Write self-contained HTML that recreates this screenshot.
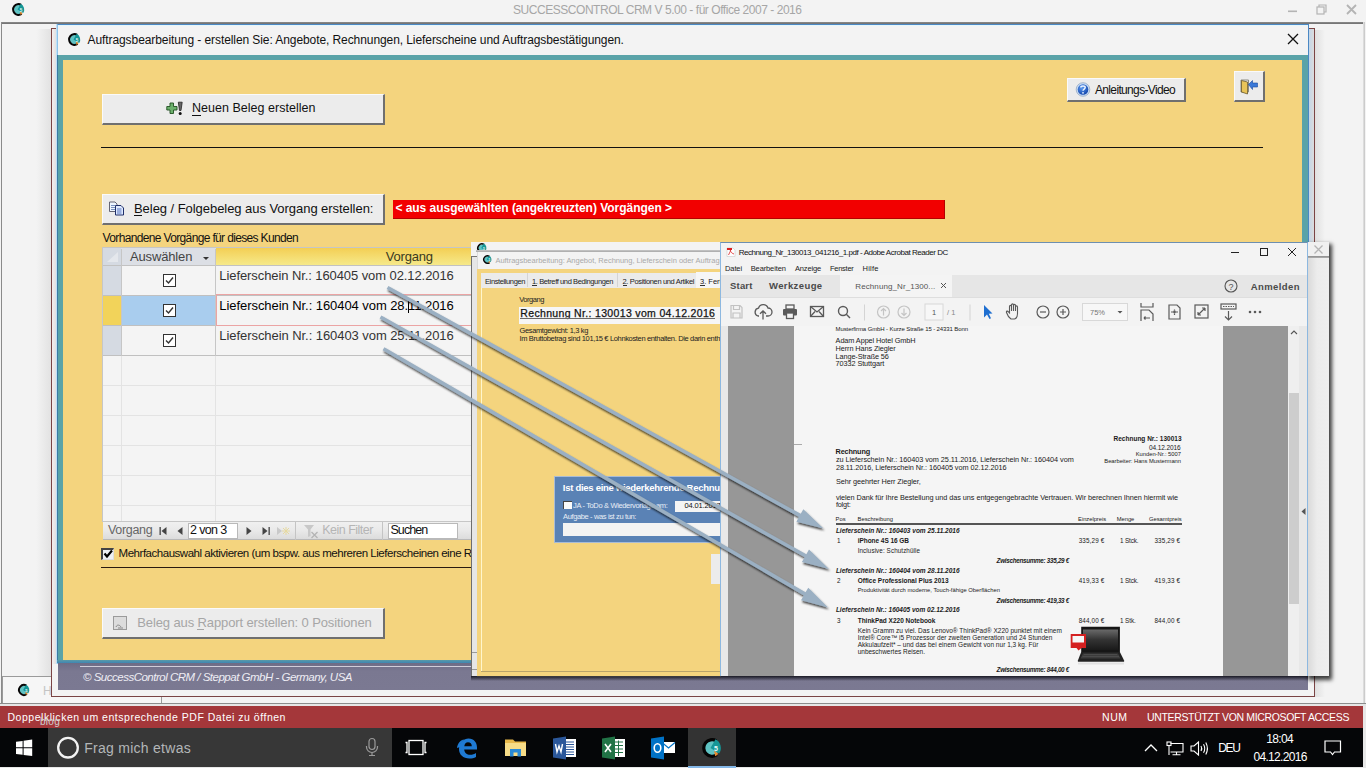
<!DOCTYPE html>
<html><head><meta charset="utf-8">
<style>
*{margin:0;padding:0;box-sizing:border-box}
html,body{width:1366px;height:768px;overflow:hidden;background:#f3f3f3;font-family:"Liberation Sans",sans-serif;position:relative}
.a{position:absolute}
.t{position:absolute;white-space:nowrap;line-height:1}
svg{position:absolute;overflow:visible}
</style></head><body>
<div class="a" style="left:0px;top:0px;width:1366px;height:22px;background:#f3f3f3"></div>
<div class="a" style="left:0px;top:22px;width:1366px;height:2px;background:linear-gradient(180deg,#8c8c8c,#6e6e6e)"></div>
<div class="a" style="left:0px;top:22px;width:1px;height:684px;background:#f3f3f3"></div>
<div class="a" style="left:1px;top:22px;width:1px;height:684px;background:#8a8a8a"></div>
<div class="a" style="left:1363px;top:22px;width:2px;height:684px;background:linear-gradient(90deg,#e4e4e4,#c4c4c4)"></div>
<div class="a" style="left:1365px;top:22px;width:1px;height:684px;background:#f3f3f3"></div>
<svg style="left:12px;top:3px" width="13" height="13" viewBox="0 0 20 20">
<circle cx="10" cy="10" r="7.2" fill="#5ec3c3"/>
<path d="M14.2 2.8 A8.3 8.3 0 1 0 14.8 16.8" fill="none" stroke="#050505" stroke-width="3.2"/>
<path d="M8.5 10 L13.5 1.2 A10 10 0 0 1 17.2 15.5 Z" fill="#159696"/>
<path d="M12 12.5 L16.2 15.8 A9.5 9.5 0 0 1 13.2 18.3 Z" fill="#ea8a2e"/>
<text x="12" y="13.2" font-size="7" font-weight="bold" fill="#e8fafa" font-family="Liberation Sans">5</text>
</svg>
<div class="t" style="left:513.00px;top:3.84px;font-size:12px;color:#a6a6a6;letter-spacing:-0.458px;">SUCCESSCONTROL CRM V 5.00 - für Office 2007 - 2016</div>
<svg style="left:1283px;top:4px" width="80" height="14" viewBox="0 0 80 14"><rect x="5" y="6.5" width="9" height="1.6" fill="#b4b4b4"/><rect x="34" y="3" width="7" height="7" fill="none" stroke="#b4b4b4" stroke-width="1.2"/><path d="M36 3 V1 H43 V8 H41" fill="none" stroke="#b4b4b4" stroke-width="1.2"/><path d="M64 1 L73 10 M73 1 L64 10" stroke="#b4b4b4" stroke-width="1.8"/></svg>
<div class="a" style="left:2px;top:29px;width:49px;height:647px;background:linear-gradient(90deg,#f3f3f3 70%,#e2e2e2)"></div>
<div class="a" style="left:2px;top:676px;width:160px;height:28px;background:#f6f6f6;border-top:1px solid #9a9a9a;border-right:1px solid #9a9a9a;border-left:1px solid #9a9a9a"></div>
<svg style="left:18px;top:684px" width="12" height="12" viewBox="0 0 20 20">
<circle cx="10" cy="10" r="7.2" fill="#5ec3c3"/>
<path d="M14.2 2.8 A8.3 8.3 0 1 0 14.8 16.8" fill="none" stroke="#050505" stroke-width="3.2"/>
<path d="M8.5 10 L13.5 1.2 A10 10 0 0 1 17.2 15.5 Z" fill="#159696"/>
<path d="M12 12.5 L16.2 15.8 A9.5 9.5 0 0 1 13.2 18.3 Z" fill="#ea8a2e"/>
<text x="12" y="13.2" font-size="7" font-weight="bold" fill="#e8fafa" font-family="Liberation Sans">5</text>
</svg>
<div class="t" style="left:43.00px;top:684.84px;font-size:12px;color:#c4c4c4;">H</div>
<div class="a" style="left:51px;top:28px;width:1264px;height:669px;border:1px solid #7a4444;background:#f3f3f3"></div>
<div class="a" style="left:52px;top:29px;width:5px;height:635px;background:linear-gradient(90deg,#f5eeee,#dedede)"></div>
<div class="a" style="left:1315px;top:30px;width:10px;height:667px;background:linear-gradient(90deg,#e0e0e0,#f3f3f3)"></div>
<div class="a" style="left:57px;top:24px;width:1252px;height:640px;background:#f3f3f3;border-top:1px solid #4a88c4;border-left:1px solid #8fc3ea;border-right:1px solid #4a88c4"></div>
<div class="a" style="left:1309px;top:29px;width:5px;height:636px;background:linear-gradient(90deg,#c4d6e8,#dcdcdc)"></div>
<div class="a" style="left:58px;top:25px;width:1250px;height:1px;background:#e4f6fb"></div>
<svg style="left:68px;top:33px" width="13" height="13" viewBox="0 0 20 20">
<circle cx="10" cy="10" r="7.2" fill="#5ec3c3"/>
<path d="M14.2 2.8 A8.3 8.3 0 1 0 14.8 16.8" fill="none" stroke="#050505" stroke-width="3.2"/>
<path d="M8.5 10 L13.5 1.2 A10 10 0 0 1 17.2 15.5 Z" fill="#159696"/>
<path d="M12 12.5 L16.2 15.8 A9.5 9.5 0 0 1 13.2 18.3 Z" fill="#ea8a2e"/>
<text x="12" y="13.2" font-size="7" font-weight="bold" fill="#e8fafa" font-family="Liberation Sans">5</text>
</svg>
<div class="t" style="left:87.50px;top:33.54px;font-size:12px;color:#111;letter-spacing:-0.081px;">Auftragsbearbeitung - erstellen Sie: Angebote, Rechnungen, Lieferscheine und Auftragsbestätigungen.</div>
<svg style="left:1287px;top:33px" width="12" height="12" viewBox="0 0 12 12"><path d="M1 1 L11 11 M11 1 L1 11" stroke="#111" stroke-width="1.3"/></svg>
<div class="a" style="left:57px;top:55px;width:1251px;height:605px;background:#5aa3a8"></div>
<div class="a" style="left:56px;top:24px;width:1px;height:640px;background:#bfe0f8"></div>
<div class="a" style="left:57px;top:55px;width:1px;height:608px;background:#3c7aa2"></div>
<div class="a" style="left:62.5px;top:60px;width:1px;height:599.4px;background:#8fae88"></div>
<div class="a" style="left:63px;top:60px;width:1239px;height:600.4px;background:#f4d47e"></div>
<div class="a" style="left:57px;top:660.4px;width:1251px;height:2.8px;background:linear-gradient(180deg,#5a9aa8,#3f86b2)"></div>
<div class="a" style="left:58px;top:663.2px;width:1250px;height:26.4px;background:linear-gradient(180deg,#6d6b85,#7a7891 30%,#7b7992)"></div>
<div class="a" style="left:80px;top:666px;width:1228px;height:1.2px;background:#cfcdda"></div>
<div class="t" style="left:83.00px;top:672.47px;font-size:11.5px;color:#eeedf4;letter-spacing:-0.499px;font-style:italic;">© SuccessControl CRM / Steppat GmbH - Germany, USA</div>
<div class="a" style="left:102px;top:94px;width:283px;height:31px;background:#ececec;border-top:1px solid #fafafa;border-left:1px solid #fafafa;border-right:2px solid #6f6f6f;border-bottom:2px solid #6f6f6f"></div>
<svg style="left:166px;top:101px" width="18" height="15" viewBox="0 0 18 15">
<path d="M4 2 H7.5 V5.5 H11 V9 H7.5 V12.5 H4 V9 H0.8 V5.5 H4 Z" fill="#6cb06c" stroke="#1f4f1f" stroke-width="0.9"/>
<path d="M12.3 1.2 H16.2 L15 9.5 H13.5 Z" fill="#666" stroke="#222" stroke-width="0.8"/><circle cx="14.2" cy="12.5" r="1.5" fill="#111"/></svg>
<div class="t" style="left:192.00px;top:102.42px;font-size:12.5px;color:#111;letter-spacing:0.024px;">Neuen Beleg erstellen</div>
<div class="a" style="left:192px;top:115px;width:9px;height:1px;background:#111"></div>
<div class="a" style="left:101px;top:147px;width:1162px;height:1.2px;background:#111"></div>
<div class="a" style="left:1067px;top:78px;width:119px;height:24px;background:#ececec;border-top:1px solid #fafafa;border-left:1px solid #fafafa;border-right:2px solid #6f6f6f;border-bottom:2px solid #6f6f6f"></div>
<svg style="left:1075px;top:82px" width="16" height="16" viewBox="0 0 16 16"><defs><radialGradient id="hg" cx=".4" cy=".35" r=".7"><stop offset="0" stop-color="#5d9bf0"/><stop offset="1" stop-color="#1143a8"/></radialGradient></defs>
<circle cx="8" cy="7.5" r="6.8" fill="#c8dcf5" stroke="#7c93b3" stroke-width="0.6"/><circle cx="8" cy="7.5" r="5.3" fill="url(#hg)"/>
<path d="M5.8 5.6 C5.8 3.6, 10.2 3.6, 10.2 5.6 C10.2 7, 8 7.2, 8 8.8" fill="none" stroke="#eaf3ff" stroke-width="1.5"/><circle cx="8" cy="10.8" r="0.9" fill="#eaf3ff"/></svg>
<div class="t" style="left:1095.00px;top:84.34px;font-size:12px;color:#111;letter-spacing:-0.657px;">Anleitungs-Video</div>
<div class="a" style="left:1234px;top:71px;width:31px;height:31px;background:#ececec;border-top:1px solid #fafafa;border-left:1px solid #fafafa;border-right:2px solid #6f6f6f;border-bottom:2px solid #6f6f6f"></div>
<svg style="left:1240px;top:79px" width="19" height="16" viewBox="0 0 19 16">
<path d="M1 1 H8.5 V13 H1 Z" fill="none" stroke="#8a8a80" stroke-width="1"/>
<path d="M1.5 1.5 L7.5 3 V15 L1.5 13 Z" fill="#e8c45a" stroke="#5a4a20" stroke-width="0.7"/>
<path d="M8.5 5.5 L12.5 1.5 V4 H17.5 V8 H12.5 V10.5 Z" fill="#3a78d8" stroke="#1a4aa0" stroke-width="0.6"/></svg>
<div class="a" style="left:102px;top:194px;width:283px;height:31px;background:#ececec;border-top:1px solid #fafafa;border-left:1px solid #fafafa;border-right:2px solid #6f6f6f;border-bottom:2px solid #6f6f6f"></div>
<svg style="left:108px;top:201px" width="17" height="15" viewBox="0 0 17 15">
<path d="M1.5 1 H7 L9 3 V10.5 H1.5 Z" fill="#eef6ff" stroke="#556" stroke-width="0.9"/>
<path d="M3 4.5 H7 M3 6.5 H7 M3 8.5 H7" stroke="#6c87b8" stroke-width="0.9"/>
<path d="M7.5 4.5 H13 L15.5 7 V14 H7.5 Z" fill="#dfeaff" stroke="#1f2f6a" stroke-width="1"/>
<path d="M9 8 H13.5 M9 10 H13.5 M9 12 H13.5" stroke="#4a6ab8" stroke-width="0.9"/></svg>
<div class="t" style="left:134.00px;top:202.00px;font-size:13px;color:#111;letter-spacing:-0.049px;">Beleg / Folgebeleg aus Vorgang erstellen:</div>
<div class="a" style="left:134px;top:215px;width:8px;height:1px;background:#111"></div>
<div class="a" style="left:393px;top:200px;width:552px;height:18.5px;background:#f20000;border-right:1px solid #b50000;border-bottom:1px solid #b50000"></div>
<div class="t" style="left:395.40px;top:202.14px;font-size:12px;color:#fff;letter-spacing:-0.028px;font-weight:bold;">&lt; aus ausgewählten (angekreuzten) Vorgängen &gt;</div>
<div class="t" style="left:102.60px;top:231.84px;font-size:12px;color:#111;letter-spacing:-0.649px;">Vorhandene Vorgänge für dieses Kunden</div>
<div class="a" style="left:102px;top:247px;width:369.5px;height:275px;background:#f4f4f4;border:1px solid #c6c6c6"></div>
<div class="a" style="left:103px;top:248px;width:18px;height:18px;background:#d5dae2"></div>
<svg style="left:106px;top:251px" width="13" height="12" viewBox="0 0 13 12"><path d="M1 11 L12 1 V11 Z" fill="#e4e7ec"/></svg>
<div class="a" style="left:121px;top:248px;width:95px;height:17px;background:#dcdfe5"></div>
<div class="a" style="left:216px;top:248px;width:254.5px;height:17px;background:linear-gradient(180deg,#f3cf55,#f6e98a)"></div>
<div class="a" style="left:103px;top:265px;width:368px;height:1px;background:#c2c2c2"></div>
<div class="t" style="left:130.00px;top:249.80px;font-size:13px;color:#444;letter-spacing:-0.155px;">Auswählen</div>
<svg style="left:202px;top:256px" width="8" height="5" viewBox="0 0 8 5"><path d="M1 1 H7 L4 4 Z" fill="#333"/></svg>
<div class="t" style="left:385.80px;top:250.40px;font-size:13px;color:#3a3a20;letter-spacing:-0.205px;">Vorgang</div>
<div class="a" style="left:103px;top:266px;width:18px;height:30px;background:#d5dae2"></div>
<div class="a" style="left:103px;top:326px;width:18px;height:29px;background:#d5dae2"></div>
<div class="a" style="left:103px;top:295px;width:368px;height:1px;background:#c0c0c0"></div>
<div class="a" style="left:103px;top:325px;width:368px;height:1px;background:#c0c0c0"></div>
<div class="a" style="left:103px;top:355px;width:368px;height:1px;background:#c0c0c0"></div>
<div class="a" style="left:103px;top:385px;width:368px;height:1px;background:#e3e3e3"></div>
<div class="a" style="left:103px;top:415px;width:368px;height:1px;background:#e3e3e3"></div>
<div class="a" style="left:103px;top:445px;width:368px;height:1px;background:#e3e3e3"></div>
<div class="a" style="left:103px;top:475px;width:368px;height:1px;background:#e3e3e3"></div>
<div class="a" style="left:103px;top:505px;width:368px;height:1px;background:#e3e3e3"></div>
<div class="a" style="left:121px;top:249px;width:1px;height:107px;background:#c6c6c6"></div>
<div class="a" style="left:215px;top:249px;width:1px;height:107px;background:#c6c6c6"></div>
<div class="a" style="left:121px;top:356px;width:1px;height:165px;background:#e3e3e3"></div>
<div class="a" style="left:215px;top:356px;width:1px;height:165px;background:#e3e3e3"></div>
<div class="a" style="left:103px;top:296px;width:18px;height:29px;background:#f2d35a"></div>
<div class="a" style="left:122px;top:296px;width:93px;height:29px;background:#a9cdee"></div>
<div class="a" style="left:215.5px;top:294.2px;width:255.5px;height:32px;border:1.6px solid #eba4a4;border-right:none"></div>
<div class="t" style="left:219.30px;top:268.90px;font-size:13px;color:#333;letter-spacing:-0.086px;">Lieferschein Nr.: 160405 vom 02.12.2016</div>
<div class="a" style="left:163px;top:274px;width:13px;height:13px;border:1.5px solid #333;background:#fff"></div>
<svg style="left:163px;top:274px" width="13" height="13" viewBox="0 0 13 13"><path d="M3 6.5 L5.5 9 L10 3.5" fill="none" stroke="#333" stroke-width="1.4"/></svg>
<div class="t" style="left:219.30px;top:298.90px;font-size:13px;color:#000;letter-spacing:-0.062px;">Lieferschein Nr.: 160404 vom 28.11.2016</div>
<div class="a" style="left:163px;top:304px;width:13px;height:13px;border:1.5px solid #333;background:#fff"></div>
<svg style="left:163px;top:304px" width="13" height="13" viewBox="0 0 13 13"><path d="M3 6.5 L5.5 9 L10 3.5" fill="none" stroke="#333" stroke-width="1.4"/></svg>
<div class="t" style="left:219.30px;top:328.90px;font-size:13px;color:#333;letter-spacing:-0.062px;">Lieferschein Nr.: 160403 vom 25.11.2016</div>
<div class="a" style="left:163px;top:334px;width:13px;height:13px;border:1.5px solid #333;background:#fff"></div>
<svg style="left:163px;top:334px" width="13" height="13" viewBox="0 0 13 13"><path d="M3 6.5 L5.5 9 L10 3.5" fill="none" stroke="#333" stroke-width="1.4"/></svg>
<div class="a" style="left:407.5px;top:298px;width:1px;height:15px;background:#000"></div>
<div class="a" style="left:103px;top:521px;width:368px;height:19px;background:linear-gradient(180deg,#f0f0f0,#e9e9e9 50%,#dcdcdc);border-top:1px solid #c6c6c6;border-bottom:1px solid #b9b9b9"></div>
<div class="t" style="left:108.00px;top:524.22px;font-size:12.5px;color:#666;letter-spacing:-0.310px;">Vorgang</div>
<svg style="left:155px;top:524px" width="140" height="15" viewBox="0 0 140 15">
<rect x="4.5" y="3" width="1.3" height="8" fill="#444"/><path d="M11.5 3 V11 L6.5 7 Z" fill="#444"/>
<path d="M27.5 3 V11 L22.5 7 Z" fill="#444"/>
<path d="M91.5 3 V11 L96.5 7 Z" fill="#444"/>
<path d="M107.5 3 V11 L112.5 7 Z" fill="#444"/><rect x="113.5" y="3" width="1.3" height="8" fill="#444"/>
<path d="M122 3 V11 L127 7 Z" fill="#c9c9c9"/><g stroke="#e6d9a0" stroke-width="1"><path d="M128 4 L134 10 M134 4 L128 10 M131 3 V11 M127 7 H135"/></g>
<rect x="140" y="0" width="1" height="15" fill="#c4c4c4"/></svg>
<div class="a" style="left:295px;top:522px;width:1px;height:18px;background:#c4c4c4"></div>
<div class="a" style="left:382px;top:522px;width:1px;height:18px;background:#c4c4c4"></div>
<div class="a" style="left:188px;top:523px;width:50px;height:15.5px;background:#fff;border:1px solid #b9b9b9"></div>
<div class="t" style="left:190.00px;top:524.22px;font-size:12.5px;color:#111;letter-spacing:-0.629px;">2 von 3</div>
<svg style="left:303px;top:524px" width="16" height="15" viewBox="0 0 16 15"><path d="M1 1 H11 L7.5 5.5 V12 L5 13 V5.5 Z" fill="#c8c8c8"/><path d="M8.5 8 L14.5 14 M14.5 8 L8.5 14" stroke="#b4b4b4" stroke-width="1.3"/></svg>
<div class="t" style="left:322.30px;top:524.12px;font-size:12.5px;color:#b5b5b5;letter-spacing:-0.524px;">Kein Filter</div>
<div class="a" style="left:388px;top:523.3px;width:69.6px;height:15.6px;background:#fff;border:1px solid #b9b9b9"></div>
<div class="t" style="left:390.40px;top:524.12px;font-size:12.5px;color:#111;letter-spacing:-0.899px;">Suchen</div>
<div class="a" style="left:101.3px;top:548px;width:12.3px;height:12.4px;background:#eef0f4;border-top:2px solid #444;border-left:2px solid #444;border-right:1px solid #ddd;border-bottom:1px solid #ddd"></div>
<svg style="left:102px;top:548px" width="12" height="12" viewBox="0 0 12 12"><path d="M2.5 5.5 L5 8.5 L10 2.5" fill="none" stroke="#000" stroke-width="2.2"/></svg>
<div class="t" style="left:118.60px;top:547.87px;font-size:11.5px;color:#111;letter-spacing:-0.475px;">Mehrfachauswahl aktivieren (um bspw. aus mehreren Lieferscheinen eine R</div>
<div class="a" style="left:101px;top:566.7px;width:370px;height:1.6px;background:#2a1a10"></div>
<div class="a" style="left:102px;top:608px;width:283px;height:31px;background:#ececec;border-top:1px solid #fafafa;border-left:1px solid #fafafa;border-right:2px solid #6f6f6f;border-bottom:2px solid #6f6f6f"></div>
<svg style="left:113px;top:616px" width="14" height="14" viewBox="0 0 14 14"><rect x="0.5" y="0.5" width="13" height="13" fill="#dcdcdc" stroke="#9a9a9a"/><path d="M3 11 C4 8, 7 9, 8 11 M5 12 L10 12" stroke="#888" stroke-width="1" fill="none"/></svg>
<div class="t" style="left:137.30px;top:616.10px;font-size:13px;color:#a6a6a6;letter-spacing:-0.117px;">Beleg aus Rapport erstellen: 0 Positionen</div>
<div class="a" style="left:197px;top:629px;width:7px;height:1px;background:#a6a6a6"></div>
<div class="a" style="left:0px;top:703px;width:1366px;height:1.2px;background:#8c8c8c"></div>
<div class="a" style="left:0px;top:704.2px;width:1366px;height:1.4px;background:#e6e6e6"></div>
<div class="a" style="left:0px;top:705.5px;width:1364px;height:22.5px;background:#a4373a"></div>
<div class="t" style="left:7.50px;top:712.01px;font-size:10.5px;color:#fff;letter-spacing:0.519px;">Doppelklicken um entsprechende PDF Datei zu öffnen</div>
<div class="t" style="left:1102.00px;top:712.01px;font-size:10.5px;color:#fff;letter-spacing:0.596px;">NUM</div>
<div class="t" style="left:1147.00px;top:712.01px;font-size:10.5px;color:#fff;letter-spacing:-0.346px;">UNTERSTÜTZT VON MICROSOFT ACCESS</div>
<div class="t" style="left:40.00px;top:717.03px;font-size:10px;color:#cfcfcf;letter-spacing:0.273px;">blog</div>
<div class="a" style="left:0px;top:728px;width:1363px;height:40px;background:#050608"></div>
<div class="a" style="left:48px;top:728px;width:344px;height:39px;background:#373737"></div>
<div class="a" style="left:0px;top:767px;width:1366px;height:1px;background:#e8e8e8"></div>
<div class="a" style="left:1363px;top:706px;width:3px;height:62px;background:#e8e8e8"></div>
<svg style="left:15px;top:739px" width="18" height="18" viewBox="0 0 18 18"><g fill="#fff"><path d="M1 2.8 L7.6 1.9 V8.3 H1 Z"/><path d="M8.6 1.75 L17.2 0.6 V8.3 H8.6 Z"/><path d="M1 9.3 H7.6 V15.8 L1 14.9 Z"/><path d="M8.6 9.3 H17.2 V17 L8.6 15.9 Z"/></g></svg>
<svg style="left:56px;top:736px" width="24" height="24" viewBox="0 0 24 24"><circle cx="12" cy="11.7" r="9.8" fill="none" stroke="#f2f2f2" stroke-width="2.3"/></svg>
<div class="t" style="left:84.20px;top:741.25px;font-size:14px;color:#b3b6b8;letter-spacing:0.274px;">Frag mich etwas</div>
<svg style="left:364px;top:737px" width="16" height="20" viewBox="0 0 16 20"><g fill="none" stroke="#9a9a9a" stroke-width="1.2"><rect x="5" y="1.5" width="6" height="11" rx="3"/><path d="M2.5 9 V10 A5.5 5.5 0 0 0 13.5 10 V9"/><path d="M8 15.5 V18.5 M5 18.5 H11"/></g></svg>
<svg style="left:404px;top:739px" width="24" height="17" viewBox="0 0 24 17"><g fill="none" stroke="#fff" stroke-width="1.3"><rect x="5" y="1.5" width="14" height="14"/><path d="M1.5 3.5 H3 V13.5 H1.5 M22.5 3.5 H21 V13.5 H22.5"/></g></svg>
<svg style="left:456px;top:737px" width="22" height="22" viewBox="0 0 22 22"><path d="M3 12 C3 5, 8 1.5, 12.5 1.5 C18 1.5, 21 5.5, 21 10.5 V12.5 H8.2 C8.5 16, 11 17.8, 14 17.8 C16.5 17.8, 18.5 17, 20 16 V20 C18 21, 16 21.5, 13.5 21.5 C7 21.5, 3 17.5, 3 12 Z M8.3 9.2 H15.8 C15.8 6.8, 14.3 5.2, 12 5.2 C10 5.2, 8.6 6.8, 8.3 9.2 Z" fill="#1f7ad3"/><path d="M1 11 C1.5 6, 5 3, 8 2.5 C5 5, 4 8, 4 10 Z" fill="#1f7ad3"/></svg>
<svg style="left:504px;top:738px" width="24" height="20" viewBox="0 0 24 20"><path d="M1 1.5 H9 L11 3.5 H22 V18 H1 Z" fill="#e8b84a"/><path d="M1 5 H22 V18 H1 Z" fill="#f7dc87"/><path d="M6 11 H17 V18.5 H13.5 V14.5 H9.5 V18.5 H6 Z" fill="#2a8ad6"/></svg>
<svg style="left:552px;top:736px" width="26" height="24" viewBox="0 0 26 24"><path d="M11 3 H24 V21 H11 Z" fill="#fff"/><g stroke="#2b579a" stroke-width="1"><path d="M13 6 H22 M13 8.5 H22 M13 11 H22 M13 13.5 H22 M13 16 H22 M13 18.5 H22"/></g><path d="M1 2.5 L14 0.5 V23.5 L1 21.5 Z" fill="#2b579a"/><path d="M3.5 8 L5 16 L7 10 L9 16 L10.5 8" fill="none" stroke="#fff" stroke-width="1.4"/></svg>
<svg style="left:601px;top:736px" width="26" height="24" viewBox="0 0 26 24"><path d="M11 3 H24 V21 H11 Z" fill="#fff"/><g stroke="#217346" stroke-width="1"><path d="M13 6 H22 M13 9.5 H22 M13 13 H22 M13 16.5 H22 M17.5 4.5 V20"/></g><path d="M1 2.5 L14 0.5 V23.5 L1 21.5 Z" fill="#217346"/><path d="M4 8 L10 16 M10 8 L4 16" stroke="#fff" stroke-width="1.6"/></svg>
<svg style="left:650px;top:736px" width="26" height="24" viewBox="0 0 26 24"><path d="M12 6 H25 V17 H12 Z" fill="#fff"/><path d="M12 6.5 L18.5 12 L25 6.5" fill="none" stroke="#0072c6" stroke-width="1.2"/><path d="M1 2.5 L14 0.5 V23.5 L1 21.5 Z" fill="#0072c6"/><ellipse cx="7.5" cy="12" rx="3.3" ry="4.2" fill="none" stroke="#fff" stroke-width="1.6"/></svg>
<div class="a" style="left:688px;top:728px;width:47.5px;height:39px;background:#333333"></div>
<div class="a" style="left:688px;top:765.5px;width:47.5px;height:2px;background:#84b8e8"></div>
<svg style="left:702px;top:738px" width="20" height="20" viewBox="0 0 20 20">
<circle cx="10" cy="10" r="7.2" fill="#5ec3c3"/>
<path d="M14.2 2.8 A8.3 8.3 0 1 0 14.8 16.8" fill="none" stroke="#050505" stroke-width="3.2"/>
<path d="M8.5 10 L13.5 1.2 A10 10 0 0 1 17.2 15.5 Z" fill="#159696"/>
<path d="M12 12.5 L16.2 15.8 A9.5 9.5 0 0 1 13.2 18.3 Z" fill="#ea8a2e"/>
<text x="12" y="13.2" font-size="7" font-weight="bold" fill="#e8fafa" font-family="Liberation Sans">5</text>
</svg>
<svg style="left:1144px;top:743px" width="14" height="9" viewBox="0 0 14 9"><path d="M1 8 L7 2 L13 8" fill="none" stroke="#fff" stroke-width="1.3"/></svg>
<svg style="left:1166px;top:741px" width="18" height="15" viewBox="0 0 18 15"><g fill="none" stroke="#fff" stroke-width="1.1"><path d="M4.5 2.5 H17 V11 H4.5"/><path d="M10.5 11 V13.8 M6.5 13.8 H14.5"/><rect x="1" y="1" width="4" height="3.5"/><path d="M3 4.5 V14"/></g></svg>
<svg style="left:1190px;top:741px" width="19" height="15" viewBox="0 0 19 15"><g fill="none" stroke="#fff" stroke-width="1.1"><path d="M1 5 H4 L8.5 1 V14 L4 10 H1 Z"/><path d="M11 5 Q12.5 7.5 11 10 M13.5 3.3 Q16 7.5 13.5 11.7 M15.8 1.5 Q19 7.5 15.8 13.5"/></g></svg>
<div class="t" style="left:1218.20px;top:741.54px;font-size:12px;color:#fff;letter-spacing:-1.345px;">DEU</div>
<div class="t" style="left:1266.30px;top:732.74px;font-size:12px;color:#fff;letter-spacing:-0.686px;">18:04</div>
<div class="t" style="left:1253.40px;top:750.54px;font-size:12px;color:#fff;letter-spacing:-0.666px;">04.12.2016</div>
<svg style="left:1324px;top:740px" width="18" height="17" viewBox="0 0 18 17"><path d="M1 1 H16.5 V12 H10.5 L8.5 14.5 L6.5 12 H1 Z" fill="none" stroke="#fff" stroke-width="1.2"/></svg>
<div class="a" style="left:471px;top:242px;width:249px;height:434px;background:#f3f3f3"></div>
<svg style="left:477px;top:243px" width="10" height="10" viewBox="0 0 20 20">
<circle cx="10" cy="10" r="7.2" fill="#5ec3c3"/>
<path d="M14.2 2.8 A8.3 8.3 0 1 0 14.8 16.8" fill="none" stroke="#050505" stroke-width="3.2"/>
<path d="M8.5 10 L13.5 1.2 A10 10 0 0 1 17.2 15.5 Z" fill="#159696"/>
<path d="M12 12.5 L16.2 15.8 A9.5 9.5 0 0 1 13.2 18.3 Z" fill="#ea8a2e"/>
<text x="12" y="13.2" font-size="7" font-weight="bold" fill="#e8fafa" font-family="Liberation Sans">5</text>
</svg>
<div class="a" style="left:476px;top:249.5px;width:244px;height:2.5px;background:linear-gradient(180deg,#c8c8c8,#a8a8a8)"></div>
<div class="a" style="left:471px;top:256px;width:5.5px;height:420px;background:#e6e6e6;border-left:1px solid #6e6e6e;border-top:1px solid #777"></div>
<div class="a" style="left:472px;top:652px;width:4.5px;height:1px;background:#9a9a9a"></div>
<div class="a" style="left:472px;top:669px;width:4.5px;height:1px;background:#9a9a9a"></div>
<div class="a" style="left:476.5px;top:252px;width:244px;height:424px;background:#f3f3f3;border-left:1px solid #dadada"></div>
<svg style="left:483px;top:255px" width="9" height="9" viewBox="0 0 20 20">
<circle cx="10" cy="10" r="7.2" fill="#5ec3c3"/>
<path d="M14.2 2.8 A8.3 8.3 0 1 0 14.8 16.8" fill="none" stroke="#050505" stroke-width="3.2"/>
<path d="M8.5 10 L13.5 1.2 A10 10 0 0 1 17.2 15.5 Z" fill="#159696"/>
<path d="M12 12.5 L16.2 15.8 A9.5 9.5 0 0 1 13.2 18.3 Z" fill="#ea8a2e"/>
<text x="12" y="13.2" font-size="7" font-weight="bold" fill="#e8fafa" font-family="Liberation Sans">5</text>
</svg>
<div class="a" style="left:476px;top:242px;width:244px;height:434px;overflow:hidden">
</div>
<div class="t" style="left:495.40px;top:256.55px;font-size:7.5px;color:#a9a9a9;letter-spacing:-0.015px;">Auftragsbearbeitung: Angebot, Rechnung, Lieferschein oder Auftrag</div>
<div class="a" style="left:477px;top:269px;width:243px;height:407px;background:#f4d47e"></div>
<div class="a" style="left:481px;top:272.5px;width:240px;height:15px;background:#ebebeb"></div>
<div class="a" style="left:527px;top:273px;width:1px;height:14px;background:#d4d4d4"></div>
<div class="a" style="left:617px;top:273px;width:1px;height:14px;background:#d4d4d4"></div>
<div class="a" style="left:696px;top:272px;width:25px;height:16px;background:#f6f6f6"></div>
<div class="t" style="left:485.00px;top:277.65px;font-size:7.5px;color:#222;letter-spacing:-0.387px;">Einstellungen</div>
<div class="t" style="left:532.00px;top:277.65px;font-size:7.5px;color:#222;letter-spacing:-0.392px;">1. Betreff und Bedingungen</div>
<div class="t" style="left:622.50px;top:277.65px;font-size:7.5px;color:#222;letter-spacing:-0.355px;">2. Positionen und Artikel</div>
<div class="t" style="left:700.00px;top:277.65px;font-size:7.5px;color:#222;">3. Fertigstellung</div>
<div class="a" style="left:532px;top:285px;width:4.5px;height:0.8px;background:#333"></div>
<div class="a" style="left:622.5px;top:285px;width:4.5px;height:0.8px;background:#333"></div>
<div class="a" style="left:700px;top:285px;width:4.5px;height:0.8px;background:#333"></div>
<div class="a" style="left:480.5px;top:288px;width:1px;height:383px;background:#fff6cc"></div>
<div class="a" style="left:480.5px;top:671px;width:240px;height:1px;background:#b8a36a"></div>
<div class="a" style="left:476.5px;top:675.5px;width:244px;height:1px;background:#f6f0d8"></div>
<div class="a" style="left:471px;top:676px;width:249px;height:5px;background:linear-gradient(180deg,rgba(15,15,25,.9),rgba(60,60,80,0))"></div>
<div class="t" style="left:519.20px;top:295.65px;font-size:7.5px;color:#222;letter-spacing:-0.449px;">Vorgang</div>
<div class="a" style="left:518.7px;top:307px;width:202px;height:17px;background:#f6f6f6"></div>
<div class="t" style="left:520.30px;top:307.71px;font-size:10.5px;color:#111;letter-spacing:0.334px;-webkit-text-stroke:0.25px #111">Rechnung Nr.: 130013 vom 04.12.2016</div>
<div class="a" style="left:520px;top:318.2px;width:195px;height:1.2px;background:#6a6a6a"></div>
<div class="t" style="left:519.50px;top:327.05px;font-size:7.5px;color:#222;letter-spacing:-0.371px;">Gesamtgewicht: 1,3 kg</div>
<div class="t" style="left:519.50px;top:335.05px;font-size:7.5px;color:#222;letter-spacing:-0.349px;">Im Bruttobetrag sind 101,15 € Lohnkosten enthalten. Die darin enthaltene</div>
<div class="a" style="left:554px;top:476px;width:170px;height:67px;background:#5a82b5;border:1px solid #a9bcd6"></div>
<div class="t" style="left:562.80px;top:482.96px;font-size:9.5px;color:#fff;letter-spacing:-0.282px;font-weight:bold;">Ist dies eine wiederkehrende Rechnung</div>
<div class="a" style="left:563px;top:501px;width:8.5px;height:7.5px;background:#fafafa;border-left:1.5px solid #444;border-top:1.5px solid #444"></div>
<div class="t" style="left:573.00px;top:501.55px;font-size:7.5px;color:#e8eef6;letter-spacing:-0.346px;">JA - ToDo &amp; Wiedervorlage am:</div>
<div class="a" style="left:674.5px;top:500.5px;width:50px;height:11px;background:#f4f4f4"></div>
<div class="t" style="left:684.50px;top:501.85px;font-size:7.5px;color:#111;letter-spacing:-0.154px;">04.01.2017</div>
<div class="t" style="left:563.00px;top:512.75px;font-size:7.5px;color:#e8eef6;letter-spacing:-0.365px;">Aufgabe - was ist zu tun:</div>
<div class="a" style="left:563px;top:523px;width:160px;height:13px;background:#f3f3f3"></div>
<div class="a" style="left:711px;top:554px;width:12px;height:30px;background:#ececec"></div>
<div class="a" style="left:1307px;top:242px;width:22px;height:434px;background:linear-gradient(90deg,#d8d8d8,#ececec 45%,#efefef);box-shadow:2px 3px 4px 1px rgba(0,0,0,.75)"></div>
<div class="a" style="left:1307px;top:242px;width:22px;height:15px;background:#f0f0f0"></div>
<div class="a" style="left:1307px;top:256px;width:22px;height:2px;background:linear-gradient(180deg,#8c8c8c,#b0b0b0)"></div>
<svg style="left:1314px;top:245px" width="9" height="9" viewBox="0 0 9 9"><path d="M0.5 0.5 L8.5 8.5 M8.5 0.5 L0.5 8.5" stroke="#b4b4b4" stroke-width="1.3"/></svg>
<div class="a" style="left:720px;top:242px;width:588px;height:434px;background:#f3f3f3;border-top:1px solid #6d8fb0;border-left:1px solid #8db8e0;border-right:1.5px solid #8db8e0"></div>
<svg style="left:726px;top:247px" width="10" height="10" viewBox="0 0 10 10"><path d="M1 1 H7 L9 3 V9.5 H1 Z" fill="#fff" stroke="#c9c9c9" stroke-width=".6"/><path d="M1 1 H6 V3 H1Z" fill="#d82020"/><path d="M2.5 8 C4 5, 5 3, 4.5 2.5 C4 3, 4.5 6, 8 7" fill="none" stroke="#d82020" stroke-width=".8"/></svg>
<div class="t" style="left:738.70px;top:249.03px;font-size:8px;color:#111;letter-spacing:-0.459px;">Rechnung_Nr_130013_041216_1.pdf - Adobe Acrobat Reader DC</div>
<div class="a" style="left:1231px;top:252px;width:8px;height:1px;background:#222"></div>
<div class="a" style="left:1259.5px;top:247.5px;width:8px;height:8px;border:1px solid #222"></div>
<svg style="left:1287px;top:247px" width="10" height="10" viewBox="0 0 10 10"><path d="M1 1 L9 9 M9 1 L1 9" stroke="#222" stroke-width="1"/></svg>
<div class="t" style="left:725.00px;top:265.05px;font-size:7.5px;color:#222;letter-spacing:-0.102px;">Datei</div>
<div class="t" style="left:750.70px;top:265.05px;font-size:7.5px;color:#222;letter-spacing:-0.118px;">Bearbeiten</div>
<div class="t" style="left:795.00px;top:265.05px;font-size:7.5px;color:#222;letter-spacing:-0.158px;">Anzeige</div>
<div class="t" style="left:830.00px;top:265.05px;font-size:7.5px;color:#222;letter-spacing:-0.275px;">Fenster</div>
<div class="t" style="left:862.60px;top:265.05px;font-size:7.5px;color:#222;letter-spacing:0.179px;">Hilfe</div>
<div class="a" style="left:721px;top:274.7px;width:586px;height:22.6px;background:#e6e6e6"></div>
<div class="a" style="left:839.5px;top:274.7px;width:112.5px;height:22.6px;background:#f4f4f4"></div>
<div class="t" style="left:730.00px;top:281.36px;font-size:9.5px;color:#4a4a4a;letter-spacing:0.191px;font-weight:bold;">Start</div>
<div class="t" style="left:769.00px;top:281.36px;font-size:9.5px;color:#4a4a4a;letter-spacing:0.391px;font-weight:bold;">Werkzeuge</div>
<div class="t" style="left:855.30px;top:282.93px;font-size:8px;color:#555;letter-spacing:0.091px;">Rechnung_Nr_1300...</div>
<svg style="left:940px;top:282px" width="7" height="7" viewBox="0 0 7 7"><path d="M1 1 L6 6 M6 1 L1 6" stroke="#555" stroke-width="1"/></svg>
<svg style="left:1224px;top:279px" width="14" height="14" viewBox="0 0 14 14"><circle cx="7" cy="7" r="6" fill="none" stroke="#555" stroke-width="1.1"/><text x="7" y="10.5" text-anchor="middle" font-size="9" font-family="Liberation Sans" fill="#555">?</text></svg>
<div class="t" style="left:1250.70px;top:281.96px;font-size:9.5px;color:#4a4a4a;letter-spacing:0.422px;font-weight:bold;">Anmelden</div>
<div class="a" style="left:721px;top:297.3px;width:586px;height:1px;background:#dedede"></div>
<svg style="left:720px;top:300px" width="560" height="24" viewBox="0 0 560 24">
<g fill="none" stroke="#c2c2c2" stroke-width="1.2"><path d="M11 5.5 H20 L22 7.5 V18 H11 Z"/><path d="M13.5 5.5 V9.5 H19.5 V5.5"/><path d="M13 18 V13 H20 V18"/></g>
<g fill="none" stroke="#5a5a5a" stroke-width="1.3"><path d="M39 16 H38 A4 4 0 0 1 38.5 8.2 A5 5 0 0 1 48 8 A3.8 3.8 0 0 1 48 16 H46"/><path d="M43 19.5 V11 M40 13.8 L43 11 L46 13.8"/></g>
<g fill="#5a5a5a"><rect x="63" y="9" width="14" height="6.5" rx="1"/><rect x="66" y="5" width="8" height="4" fill="none" stroke="#5a5a5a" stroke-width="1.3"/><rect x="66.5" y="13" width="7" height="5.5" fill="#f3f3f3" stroke="#5a5a5a" stroke-width="1.3"/></g>
<g fill="none" stroke="#5a5a5a" stroke-width="1.3"><rect x="90.5" y="6.5" width="13" height="10"/><path d="M90.5 6.5 L97 12 L103.5 6.5 M90.5 16.5 L95 11.5 M103.5 16.5 L99 11.5"/></g>
<g fill="none" stroke="#5a5a5a" stroke-width="1.4"><circle cx="123" cy="11" r="4.5"/><path d="M126.3 14.3 L130 18"/></g>
<rect x="144" y="4.5" width="1" height="16" fill="#d4d4d4"/>
<g fill="none" stroke="#c4c4c4" stroke-width="1.2"><circle cx="163.5" cy="12" r="6"/><path d="M163.5 15.5 V8.5 M161 11 L163.5 8.5 L166 11"/><circle cx="184" cy="12" r="6"/><path d="M184 8.5 V15.5 M181.5 13 L184 15.5 L186.5 13"/></g>
<rect x="205" y="4" width="18" height="16" fill="#f7f7f7" stroke="#d8d8d8" stroke-width="1"/>
<text x="212" y="15" font-size="7.5" font-family="Liberation Sans" fill="#555">1</text>
<text x="227" y="15" font-size="7.5" font-family="Liberation Sans" fill="#888">/  1</text>
<rect x="249.5" y="4.5" width="1" height="16" fill="#d4d4d4"/>
<path d="M264 5 L264 17.5 L267 14.5 L269.5 19 L271 18.2 L268.8 13.8 L272.5 13.5 Z" fill="#1f6fd0"/>
<g fill="none" stroke="#5a5a5a" stroke-width="1.1"><path d="M291 19 C288 17,287 14,286.5 12.5 C286 11,287.5 10.5,288.5 12 L289.5 13 V6.5 C289.5 5,291.5 5,291.5 6.5 V11 V5 C291.5 3.5,293.5 3.5,293.5 5 V11 V5.5 C293.5 4,295.5 4,295.5 5.5 V11 V7 C295.5 5.5,297.5 5.5,297.5 7 V13.5 C297.5 16.5,296 18.5,294.5 19 Z"/></g>
<g fill="none" stroke="#5a5a5a" stroke-width="1.2"><circle cx="323" cy="12" r="6"/><path d="M320 12 H326"/><circle cx="343" cy="12" r="6"/><path d="M340 12 H346 M343 9 V15"/></g>
<rect x="362.5" y="3.5" width="45" height="17" fill="#f7f7f7" stroke="#d8d8d8" stroke-width="1"/>
<text x="370" y="14.5" font-size="7.5" font-family="Liberation Sans" fill="#777">75%</text>
<path d="M397.5 11 L402.5 11 L400 13.5 Z" fill="#555"/>
<g fill="none" stroke="#5a5a5a" stroke-width="1.2"><path d="M421 3 V7 H433 V3"/><path d="M421 21 V10 H429 L433 14 V21"/><path d="M424 18 L430 18 M424 18 L425.5 16.5 M424 18 L425.5 19.5"/></g>
<g fill="none" stroke="#5a5a5a" stroke-width="1.2"><path d="M449 5 H457 L460 8 V19 H449 Z"/><circle cx="454.5" cy="12" r="0.8" fill="#5a5a5a"/><path d="M451 12 H453 M456 12 H458 M454.5 9.5 V10.5 M454.5 13.5 V15"/></g>
<g fill="none" stroke="#5a5a5a" stroke-width="1.2"><rect x="475" y="5" width="13" height="13"/><path d="M478 15 L485 8 M478 15 V12 M478 15 H481 M485 8 H482 M485 8 V11"/></g>
<g fill="none" stroke="#5a5a5a" stroke-width="1.2"><rect x="501" y="4" width="15" height="5"/><path d="M503 6.5 H514" stroke-dasharray="1.5 1"/><path d="M508.5 11 V20 M505 16.5 L508.5 20 L512 16.5"/></g>
<g fill="#5a5a5a"><circle cx="530" cy="12" r="1.3"/><circle cx="535" cy="12" r="1.3"/><circle cx="540" cy="12" r="1.3"/></g>
</svg>
<div class="a" style="left:721px;top:326px;width:586px;height:350px;background:#e8e8e8"></div>
<div class="a" style="left:728px;top:326px;width:66px;height:350px;background:#979797"></div>
<div class="a" style="left:794px;top:326px;width:429px;height:350px;background:#f5f5f5"></div>
<div class="a" style="left:1223px;top:326px;width:65px;height:350px;background:#979797"></div>
<div class="a" style="left:720px;top:676px;width:588px;height:5px;background:linear-gradient(180deg,rgba(15,15,25,.9),rgba(60,60,80,0))"></div>
<div class="a" style="left:1288px;top:326px;width:11px;height:350px;background:#efefef"></div>
<div class="a" style="left:1289px;top:393px;width:10px;height:211px;background:#cdcdcd"></div>
<svg style="left:1290px;top:329px" width="8" height="6" viewBox="0 0 8 6"><path d="M1 5 L4 2 L7 5" fill="none" stroke="#555" stroke-width="1.1"/></svg>
<svg style="left:1301px;top:508px" width="5" height="7" viewBox="0 0 5 7"><path d="M4.5 0 L0.5 3.5 L4.5 7 Z" fill="#555"/></svg>
<div class="a" style="left:794px;top:444px;width:8px;height:1px;background:#aaa"></div>
<div class="a" style="left:0;top:0;width:1366px;height:768px;clip-path:inset(326.5px 143px 92px 794px)">
<div class="t" style="left:835.60px;top:326.12px;font-size:6px;color:#1a1a1a;letter-spacing:-0.108px;">Musterfirma GmbH - Kurze Straße 15 - 24331 Bonn</div>
<div class="t" style="left:835.60px;top:336.52px;font-size:7.3px;color:#1a1a1a;letter-spacing:-0.082px;">Adam Appel Hotel GmbH</div>
<div class="t" style="left:835.60px;top:344.82px;font-size:7.3px;color:#1a1a1a;letter-spacing:-0.091px;">Herrn Hans Ziegler</div>
<div class="t" style="left:835.60px;top:352.52px;font-size:7.3px;color:#1a1a1a;letter-spacing:-0.107px;">Lange-Straße 56</div>
<div class="t" style="left:835.60px;top:360.42px;font-size:7.3px;color:#1a1a1a;letter-spacing:-0.087px;">70332 Stuttgart</div>
<div class="t" style="left:1113.50px;top:435.60px;font-size:6.5px;color:#1a1a1a;letter-spacing:0.009px;font-weight:bold;">Rechnung Nr.: 130013</div>
<div class="t" style="left:1149.00px;top:444.50px;font-size:6.5px;color:#1a1a1a;letter-spacing:-0.103px;">04.12.2016</div>
<div class="t" style="left:1135.70px;top:452.29px;font-size:5.8px;color:#1a1a1a;letter-spacing:-0.009px;">Kunden-Nr.: 5007</div>
<div class="t" style="left:1104.30px;top:458.99px;font-size:5.8px;color:#1a1a1a;letter-spacing:-0.023px;">Bearbeiter: Hans Mustermann</div>
<div class="t" style="left:835.60px;top:447.92px;font-size:7.3px;color:#1a1a1a;letter-spacing:-0.159px;font-weight:bold;">Rechnung</div>
<div class="t" style="left:835.90px;top:455.87px;font-size:7.3px;color:#1a1a1a;letter-spacing:-0.053px;">zu Lieferschein Nr.: 160403 vom 25.11.2016, Lieferschein Nr.: 160404 vom</div>
<div class="t" style="left:835.90px;top:464.12px;font-size:7.3px;color:#1a1a1a;letter-spacing:-0.059px;">28.11.2016, Lieferschein Nr.: 160405 vom 02.12.2016</div>
<div class="t" style="left:835.90px;top:477.52px;font-size:7.3px;color:#1a1a1a;letter-spacing:-0.074px;">Sehr geehrter Herr Ziegler,</div>
<div class="t" style="left:835.90px;top:494.12px;font-size:7.3px;color:#1a1a1a;letter-spacing:-0.061px;">vielen Dank für Ihre Bestellung und das uns entgegengebrachte Vertrauen. Wir berechnen Ihnen hiermit wie</div>
<div class="t" style="left:835.90px;top:501.12px;font-size:7.3px;color:#1a1a1a;letter-spacing:-0.187px;">folgt:</div>
<div class="t" style="left:835.50px;top:516.89px;font-size:5.8px;color:#1a1a1a;letter-spacing:0.037px;">Pos</div>
<div class="t" style="left:857.60px;top:516.89px;font-size:5.8px;color:#1a1a1a;letter-spacing:-0.012px;">Beschreibung</div>
<div class="t" style="left:1078.10px;top:516.89px;font-size:5.8px;color:#1a1a1a;letter-spacing:-0.041px;">Einzelpreis</div>
<div class="t" style="left:1116.80px;top:516.89px;font-size:5.8px;color:#1a1a1a;letter-spacing:-0.045px;">Menge</div>
<div class="t" style="left:1149.00px;top:516.89px;font-size:5.8px;color:#1a1a1a;letter-spacing:-0.024px;">Gesamtpreis</div>
<div class="a" style="left:835.5px;top:523px;width:346.5px;height:1.6px;background:#555"></div>
<div class="t" style="left:835.90px;top:528.20px;font-size:6.5px;color:#1a1a1a;letter-spacing:0.006px;font-weight:bold;font-style:italic;">Lieferschein Nr.: 160403 vom 25.11.2016</div>
<div class="t" style="left:837.00px;top:538.37px;font-size:6.3px;color:#1a1a1a;">1</div>
<div class="t" style="left:857.70px;top:538.20px;font-size:6.5px;color:#1a1a1a;letter-spacing:-0.048px;font-weight:bold;">iPhone 4S 16 GB</div>
<div class="t" style="left:1078.70px;top:538.37px;font-size:6.3px;color:#1a1a1a;letter-spacing:0.136px;">335,29 €</div>
<div class="t" style="left:1119.90px;top:538.37px;font-size:6.3px;color:#1a1a1a;letter-spacing:-0.092px;">1 Stck.</div>
<div class="t" style="left:1154.40px;top:538.37px;font-size:6.3px;color:#1a1a1a;letter-spacing:0.161px;">335,29 €</div>
<div class="t" style="left:835.90px;top:567.60px;font-size:6.5px;color:#1a1a1a;letter-spacing:0.006px;font-weight:bold;font-style:italic;">Lieferschein Nr.: 160404 vom 28.11.2016</div>
<div class="t" style="left:837.00px;top:577.97px;font-size:6.3px;color:#1a1a1a;">2</div>
<div class="t" style="left:857.70px;top:577.80px;font-size:6.5px;color:#1a1a1a;letter-spacing:-0.008px;font-weight:bold;">Office Professional Plus 2013</div>
<div class="t" style="left:1078.70px;top:577.97px;font-size:6.3px;color:#1a1a1a;letter-spacing:0.136px;">419,33 €</div>
<div class="t" style="left:1119.90px;top:577.97px;font-size:6.3px;color:#1a1a1a;letter-spacing:-0.092px;">1 Stck.</div>
<div class="t" style="left:1154.40px;top:577.97px;font-size:6.3px;color:#1a1a1a;letter-spacing:0.161px;">419,33 €</div>
<div class="t" style="left:835.90px;top:607.05px;font-size:6.5px;color:#1a1a1a;letter-spacing:-0.006px;font-weight:bold;font-style:italic;">Lieferschein Nr.: 160405 vom 02.12.2016</div>
<div class="t" style="left:837.00px;top:617.77px;font-size:6.3px;color:#1a1a1a;">3</div>
<div class="t" style="left:857.70px;top:617.60px;font-size:6.5px;color:#1a1a1a;letter-spacing:-0.014px;font-weight:bold;">ThinkPad X220 Notebook</div>
<div class="t" style="left:1078.70px;top:617.77px;font-size:6.3px;color:#1a1a1a;letter-spacing:0.136px;">844,00 €</div>
<div class="t" style="left:1119.90px;top:617.77px;font-size:6.3px;color:#1a1a1a;letter-spacing:-0.050px;">1 Stk.</div>
<div class="t" style="left:1154.40px;top:617.77px;font-size:6.3px;color:#1a1a1a;letter-spacing:0.161px;">844,00 €</div>
<div class="t" style="left:857.70px;top:548.47px;font-size:6.3px;color:#1a1a1a;letter-spacing:0.084px;">Inclusive: Schutzhülle</div>
<div class="t" style="left:996.60px;top:558.47px;font-size:6.3px;color:#1a1a1a;letter-spacing:-0.291px;font-weight:bold;font-style:italic;">Zwischensumme: 335,29 €</div>
<div class="t" style="left:857.70px;top:587.59px;font-size:5.8px;color:#1a1a1a;letter-spacing:0.004px;">Produktivität durch moderne, Touch-fähige Oberflächen</div>
<div class="t" style="left:996.60px;top:597.77px;font-size:6.3px;color:#1a1a1a;letter-spacing:-0.291px;font-weight:bold;font-style:italic;">Zwischensumme: 419,33 €</div>
<div class="t" style="left:857.70px;top:627.90px;font-size:6.5px;color:#1a1a1a;letter-spacing:0.005px;">Kein Gramm zu viel. Das Lenovo® ThinkPad® X220 punktet mit einem</div>
<div class="t" style="left:857.70px;top:634.90px;font-size:6.5px;color:#1a1a1a;letter-spacing:0.008px;">Intel® Core™ i5 Prozessor der zweiten Generation und 24 Stunden</div>
<div class="t" style="left:857.70px;top:641.90px;font-size:6.5px;color:#1a1a1a;letter-spacing:0.019px;">Akkulaufzeit* – und das bei einem Gewicht von nur 1,3 kg. Für</div>
<div class="t" style="left:857.70px;top:648.90px;font-size:6.5px;color:#1a1a1a;letter-spacing:-0.013px;">unbeschwertes Reisen.</div>
<div class="t" style="left:996.60px;top:667.27px;font-size:6.3px;color:#1a1a1a;letter-spacing:-0.291px;font-weight:bold;font-style:italic;">Zwischensumme: 844,00 €</div>
<svg style="left:1068px;top:625px" width="58" height="40" viewBox="0 0 58 40">
<defs><linearGradient id="scr" x1="0" y1="0" x2="0" y2="1"><stop offset="0" stop-color="#6a6a6a"/><stop offset=".5" stop-color="#333"/><stop offset="1" stop-color="#1a1a1a"/></linearGradient></defs>
<path d="M13.2 1.8 H51.9 V26.9 H13.2 Z" fill="#161616"/>
<path d="M15 4.5 H50 V25 H15 Z" fill="url(#scr)"/>
<path d="M13.2 26.9 H51.9 L56.1 35.5 V36.7 H9.9 V35.5 Z" fill="#222"/>
<path d="M15 28.5 H50 L52.5 33.5 H12.5 Z" fill="#3c3c3c"/>
<path d="M16 29.5 H49 M14.5 31.5 H51" stroke="#555" stroke-width=".6"/>
<rect x="10" y="37.5" width="46" height="2" fill="#dcdcdc" opacity=".8"/>
<path d="M2.7 9 H18 V23 H13.5 L10.5 25.5 L8.5 23 H2.7 Z" fill="#d42020"/>
<rect x="4.5" y="11" width="11.5" height="6.5" fill="#f6f6f6"/>
</svg>
</div>
<svg style="left:0;top:0" width="1366" height="768" viewBox="0 0 1366 768"><defs><filter id="sh" x="-10%" y="-10%" width="130%" height="130%"><feGaussianBlur in="SourceAlpha" stdDeviation="1.3"/><feOffset dx="1.2" dy="2" result="o"/><feComponentTransfer><feFuncA type="linear" slope="0.75"/></feComponentTransfer><feMerge><feMergeNode/><feMergeNode in="SourceGraphic"/></feMerge></filter></defs><g filter="url(#sh)" fill="#9bb0c3"><polygon points="386.63,289.08 799.00,517.01 796.39,521.74 823.50,528.50 803.35,509.14 800.74,513.86 388.37,285.92"/><polygon points="379.62,318.57 804.58,557.34 801.93,562.05 829.00,569.00 808.99,549.50 806.34,554.20 381.38,315.43"/><polygon points="382.59,350.26 803.76,595.47 801.04,600.14 828.00,607.50 808.29,587.69 805.57,592.36 384.41,347.14"/></g></svg>
</body></html>
